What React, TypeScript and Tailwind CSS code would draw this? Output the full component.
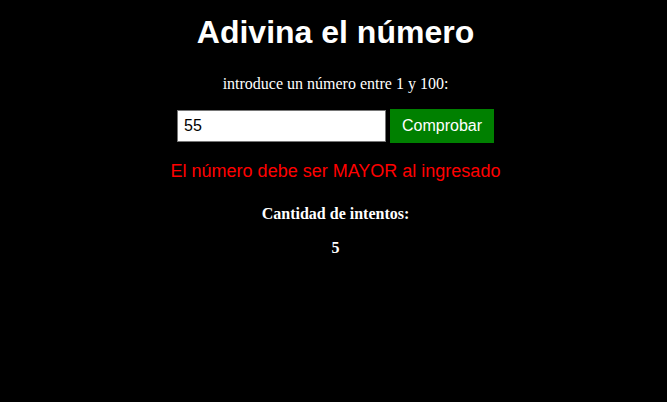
export default function App() {
  return (
    <div className="min-h-screen w-full bg-black text-white flex flex-col items-center pl-[4px]">
      <h1 className="mt-[14px] text-[32px] leading-[37px] font-bold font-['Liberation_Sans',Arial,sans-serif]">
        Adivina el número
      </h1>
      <p className="mt-[24px] text-base leading-[18px] font-['Liberation_Serif','Times_New_Roman',serif]">
        introduce un número entre 1 y 100:
      </p>
      <div className="mt-[16px] flex items-center gap-[4px]">
        <input
          type="text"
          defaultValue="55"
          className="w-[209px] h-[32px] bg-white text-black border border-[#767676] px-[6px] text-base font-['Liberation_Sans',Arial,sans-serif] outline-none"
        />
        <button className="w-[104px] h-[34px] bg-[#008000] text-white text-base font-['Liberation_Sans',Arial,sans-serif]">
          Comprobar
        </button>
      </div>
      <p className="mt-[18px] text-lg leading-[21px] text-[#ff0000] font-['Liberation_Sans',Arial,sans-serif]">
        El número debe ser MAYOR al ingresado
      </p>
      <p className="mt-[23px] text-base leading-[18px] font-bold font-['Liberation_Serif','Times_New_Roman',serif]">
        Cantidad de intentos:
      </p>
      <p className="mt-[16px] text-base leading-[18px] font-bold font-['Liberation_Serif','Times_New_Roman',serif]">
        5
      </p>
    </div>
  );
}
